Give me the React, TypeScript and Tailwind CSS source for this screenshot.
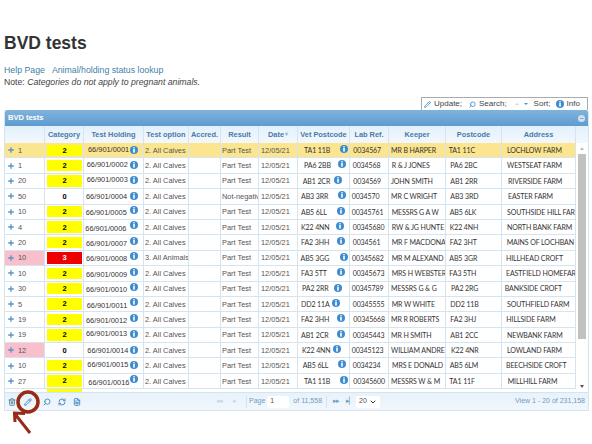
import { Pencil, Search, RefreshCw, FileText, Trash2, ChevronDown, Plus } from 'lucide-react'

type Row = {
  n: number
  cat: number
  holding: string
  hx: number
  hy: number
  opt: string
  result: string
  vet: string
  vx: number
  vi: number
  lab: string
  lx: number
  keeper: string
  kx: number
  post: string
  px: number
  addr: string
  ax: number
}

const rows: Row[] = [
  { n: 1, cat: 2, holding: '66/901/0001', hx: 4, hy: -1, opt: '2. All Calves', result: 'Part Test', vet: 'TA1 11B', vx: 6, vi: 42, lab: '0034567', lx: 3.3, keeper: 'MR B HARPER', kx: 2, post: 'TA1 11C', px: 2.7, addr: 'LOCHLOW FARM', ax: 5 },
  { n: 1, cat: 2, holding: '66/901/0002', hx: 2.7, hy: -1, opt: '2. All Calves', result: 'Part Test', vet: 'PA6 2BB', vx: 6, vi: 40, lab: '0034568', lx: 2.7, keeper: 'R & J JONES', kx: 2.7, post: 'PA6 2BC', px: 4.3, addr: 'WESTSEAT FARM', ax: 5 },
  { n: 20, cat: 2, holding: '66/901/0003', hx: 2.7, hy: -1, opt: '2. All Calves', result: 'Part Test', vet: 'AB1 2CR', vx: 4.7, vi: 36, lab: '0034569', lx: 3.3, keeper: 'JOHN SMITH', kx: 2, post: 'AB1 2RR', px: 4.3, addr: 'RIVERSIDE FARM', ax: 6 },
  { n: 50, cat: 0, holding: '66/901/0004', hx: 2, hy: 0, opt: '2. All Calves', result: 'Not-negativ', vet: 'AB3 3RR', vx: 3, vi: 40, lab: '0034570', lx: 1.7, keeper: 'MR C WRIGHT', kx: 2, post: 'AB3 3RD', px: 4.3, addr: 'EASTER FARM', ax: 6 },
  { n: 10, cat: 2, holding: '66/901/0005', hx: 1.7, hy: 1, opt: '2. All Calves', result: 'Part Test', vet: 'AB5 6LL', vx: 3, vi: 39, lab: '00345761', lx: 1.7, keeper: 'MESSRS G A W', kx: 2.7, post: 'AB5 6LK', px: 3.7, addr: 'SOUTHSIDE HILL FAR', ax: 5 },
  { n: 4, cat: 2, holding: '66/901/0006', hx: 1.3, hy: 1, opt: '2. All Calves', result: 'Part Test', vet: 'K22 4NN', vx: 3, vi: 38, lab: '00345680', lx: 2.7, keeper: 'RW & JG HUNTE', kx: 2.7, post: 'K22 4NH', px: 3.7, addr: 'NORTH BANK FARM', ax: 5 },
  { n: 20, cat: 2, holding: '66/901/0007', hx: 2, hy: 1, opt: '2. All Calves', result: 'Part Test', vet: 'FA2 3HH', vx: 3, vi: 39, lab: '0034561', lx: 2.7, keeper: 'MR F MACDONA', kx: 2.7, post: 'FA2 3HT', px: 3.7, addr: 'MAINS OF LOCHBAN', ax: 4.7 },
  { n: 10, cat: 3, holding: '66/901/0008', hx: 2, hy: 1, opt: '3. All Animals', result: 'Part Test', vet: 'AB5 3GG', vx: 2.5, vi: 42, lab: '00345682', lx: 2, keeper: 'MR M ALEXAND', kx: 2.7, post: 'AB5 3GR', px: 3.3, addr: 'HILLHEAD CROFT', ax: 4 },
  { n: 10, cat: 2, holding: '66/901/0009', hx: 2, hy: 1, opt: '2. All Calves', result: 'Part Test', vet: 'FA3 5TT', vx: 3, vi: 39, lab: '00345673', lx: 2.7, keeper: 'MRS H WEBSTER', kx: 2.7, post: 'FA3 5TH', px: 3.3, addr: 'EASTFIELD HOMEFAR', ax: 4 },
  { n: 30, cat: 2, holding: '66/901/0010', hx: 2, hy: 1, opt: '2. All Calves', result: 'Part Test', vet: 'PA2 2RR', vx: 4, vi: 36, lab: '00345789', lx: 1.7, keeper: 'MESSRS G & G', kx: 2, post: 'PA2 2RG', px: 5, addr: 'BANKSIDE CROFT', ax: 2.7 },
  { n: 5, cat: 2, holding: '66/901/0011', hx: 2.7, hy: 1, opt: '2. All Calves', result: 'Part Test', vet: 'DD2 11A', vx: 3, vi: 34, lab: '00345555', lx: 2.7, keeper: 'MR W WHITE', kx: 2.7, post: 'DD2 11B', px: 4.3, addr: 'SOUTHFIELD FARM', ax: 5 },
  { n: 19, cat: 2, holding: '66/901/0012', hx: 2, hy: 1, opt: '2. All Calves', result: 'Part Test', vet: 'FA2 3HH', vx: 3, vi: 39, lab: '00345668', lx: 3.3, keeper: 'MR R ROBERTS', kx: 2, post: 'FA2 3HJ', px: 4.3, addr: 'HILLSIDE FARM', ax: 4.3 },
  { n: 19, cat: 2, holding: '66/901/0013', hx: 2, hy: -1, opt: '2. All Calves', result: 'Part Test', vet: 'AB1 2CR', vx: 3, vi: 39, lab: '00345443', lx: 2.7, keeper: 'MR H SMITH', kx: 2, post: 'AB1 2CC', px: 4.3, addr: 'NEWBANK FARM', ax: 5 },
  { n: 12, cat: 0, holding: '66/901/0014', hx: 3.3, hy: 0, opt: '2. All Calves', result: 'Part Test', vet: 'K22 4NN', vx: 4, vi: 35, lab: '00345123', lx: 1.7, keeper: 'WILLIAM ANDRE', kx: 2, post: 'K22 4NR', px: 5, addr: 'LOWLAND FARM', ax: 5 },
  { n: 10, cat: 2, holding: '66/901/0015', hx: 3.3, hy: -1, opt: '2. All Calves', result: 'Part Test', vet: 'AB5 6LL', vx: 4.7, vi: 40, lab: '0034234', lx: 2.7, keeper: 'MRS E DONALD', kx: 3, post: 'AB5 6LM', px: 3.7, addr: 'BEECHSIDE CROFT', ax: 4 },
  { n: 27, cat: 2, holding: '66/901/0016', hx: 4.3, hy: 1, opt: '2. All Calves', result: 'Part Test', vet: 'TA1 11B', vx: 6, vi: 42, lab: '00345600', lx: 3.3, keeper: 'MESSRS W & M', kx: 2, post: 'TA1 11F', px: 3.3, addr: 'MILLHILL FARM', ax: 5.7 },
]

const headers = [
  { label: '', w: 'w-[40px]' },
  { label: 'Category', w: 'w-[39px]' },
  { label: 'Test Holding', w: 'w-[60px]' },
  { label: 'Test option', w: 'w-[45px]' },
  { label: 'Accred.', w: 'w-[32px]' },
  { label: 'Result', w: 'w-[38px]' },
  { label: 'Date', w: 'w-[39px]' },
  { label: 'Vet Postcode', w: 'w-[52px]' },
  { label: 'Lab Ref.', w: 'w-[39px]' },
  { label: 'Keeper', w: 'w-[57px]' },
  { label: 'Postcode', w: 'w-[56px]' },
  { label: 'Address', w: 'w-[74px]' },
]

function InfoDot({ className = '', style }: { className?: string; style?: React.CSSProperties }) {
  return (
    <svg width="8" height="8" viewBox="0 0 8 8" className={className} style={style}>
      <circle cx="4" cy="4" r="4" fill="#3f8bd0" />
      <rect x="3.2" y="1.2" width="1.6" height="1.2" fill="#fff" />
      <rect x="3.2" y="3" width="1.6" height="3.6" fill="#fff" />
    </svg>
  )
}

function CategoryCell({ cat }: { cat: number }) {
  const bg = cat === 2 ? 'bg-[#ffff00] text-black' : cat === 3 ? 'bg-[#ee0000] text-white' : 'text-black'
  return (
    <div className="w-[39px] shrink-0 border-r border-[#d5e4f1] py-[1.5px] pl-[2px] pr-[1px]">
      <div className={`flex h-full items-center justify-center text-[7.5px] font-bold ${bg}`}>{cat}</div>
    </div>
  )
}

function GridRow({ row, first }: { row: Row; first: boolean }) {
  const pink = row.n === 12 || row.cat === 3
  const pasted = "font-['Lato',sans-serif] text-[7px] tracking-[-0.1px] text-[#333]"
  return (
    <div className={`flex h-[15.4px] border-b border-[#d5e4f1] text-[7.4px] text-[#555] ${first ? 'bg-[#fbe58f]' : ''}`}>
      <div className={`flex w-[40px] shrink-0 items-center border-r border-[#d5e4f1] pl-[2px] ${pink ? 'bg-[#f9c0cb]' : ''}`}>
        <Plus size={8} strokeWidth={4} className="text-[#5a95c8]" />
        <span className="ml-[3px]">{row.n}</span>
      </div>
      <CategoryCell cat={row.cat} />
      <div className="relative flex w-[60px] shrink-0 items-center border-r border-[#d5e4f1]">
        <span className="text-[#333]" style={{ marginLeft: row.hx, marginTop: row.hy * 2 }}>{row.holding}</span>
        <InfoDot className="absolute left-[46px]" style={{ top: row.hy > 0 ? 1.5 : 2.5 }} />
      </div>
      <div className="flex w-[45px] shrink-0 items-center overflow-hidden whitespace-nowrap border-r border-[#d5e4f1] pl-[1px]">{row.opt}</div>
      <div className="w-[32px] shrink-0 border-r border-[#d5e4f1]" />
      <div className="flex w-[38px] shrink-0 items-center overflow-hidden whitespace-nowrap border-r border-[#d5e4f1] pl-[1px]">{row.result}</div>
      <div className="flex w-[39px] shrink-0 items-center border-r border-[#d5e4f1] pl-[2px]">12/05/21</div>
      <div className={`relative flex w-[52px] shrink-0 items-center whitespace-nowrap border-r border-[#d5e4f1] ${pasted}`}>
        <span style={{ marginLeft: row.vx }}>{row.vet}</span>
        <InfoDot className="absolute top-[2px]" style={{ left: row.vi }} />
      </div>
      <div className={`flex w-[39px] shrink-0 items-center overflow-hidden whitespace-nowrap border-r border-[#d5e4f1] ${pasted}`}>
        <span style={{ marginLeft: row.lx }}>{row.lab}</span>
      </div>
      <div className={`flex w-[57px] shrink-0 items-center overflow-hidden whitespace-nowrap border-r border-[#d5e4f1] ${pasted}`}>
        <span style={{ marginLeft: row.kx }}>{row.keeper}</span>
      </div>
      <div className={`flex w-[56px] shrink-0 items-center whitespace-nowrap border-r border-[#d5e4f1] ${pasted}`}>
        <span style={{ marginLeft: row.px }}>{row.post}</span>
      </div>
      <div className={`flex w-[74px] shrink-0 items-center overflow-hidden whitespace-nowrap border-r border-[#d5e4f1] ${pasted}`}>
        <span style={{ marginLeft: row.ax }}>{row.addr}</span>
      </div>
    </div>
  )
}

function Scrollbar() {
  return (
    <div className="flex w-[12px] shrink-0 flex-col items-center bg-white">
      <span className="mt-[4px] h-0 w-0 border-x-[2px] border-b-[3px] border-x-transparent border-b-[#bbb]" />
      <div className="mt-[4px] h-[185px] w-[8px] bg-[#c1c1c1]" />
      <span className="mt-auto mb-[4px] h-0 w-0 border-x-[2px] border-t-[3px] border-x-transparent border-t-[#555]" />
    </div>
  )
}

function Pager() {
  return (
    <div className="flex h-[18px] items-center rounded-b-[3px] border-t border-[#d5e4f1] bg-gradient-to-b from-[#e8f2fb] to-[#f1f7fc] text-[7px] text-[#6f9cc0]">
      <div className="flex w-[212px] shrink-0 items-center gap-[7px] pl-[3px] text-[#4f8fc8]">
        <Trash2 size={8} strokeWidth={3} className="text-[#5f88a8]" />
        <Pencil size={8} strokeWidth={3} className="ml-[1px]" />
        <Search size={8} strokeWidth={3} className="ml-[4px] -scale-x-100" />
        <RefreshCw size={8} strokeWidth={3} />
        <FileText size={8} strokeWidth={3} />
      </div>
      <span className="ml-[-1px] w-[14px] text-[7px] tracking-[-1px] text-[#c5d6e4]">◂◂</span>
      <span className="ml-[2px] w-[14px] text-[7px] tracking-[-1px] text-[#c5d6e4]">◂</span>
      <span className="h-[12px] w-px bg-[#d5e4f1]" />
      <span className="ml-[2px]">Page</span>
      <span className="ml-[2px] flex h-[12px] w-[22px] items-center rounded-[2px] bg-white pl-[3px] text-[#555]">1</span>
      <span className="ml-[4px]">of 11,558</span>
      <span className="ml-[4px] h-[12px] w-px bg-[#d5e4f1]" />
      <span className="ml-[6px] text-[7px] tracking-[-1px] text-[#6f9cc0]">▸▸</span>
      <span className="ml-[7px] text-[7px] tracking-[-1px] text-[#6f9cc0]">▸▏</span>
      <span className="ml-[3px] flex h-[12px] w-[24px] items-center justify-between rounded-[2px] bg-white px-[3px] text-[#555]">
        20
        <ChevronDown size={8} strokeWidth={3} className="text-[#333]" />
      </span>
      <span className="ml-auto pr-[3px]">View 1 - 20 of 231,158</span>
    </div>
  )
}

function Annotation() {
  return (
    <svg width="50" height="50" viewBox="0 0 50 50" className="absolute left-[5px] top-[388px]">
      <circle cx="23" cy="14" r="10" fill="none" stroke="#982a18" strokeWidth="3.5" />
      <path d="M25 45 L10 26 M10 34 L9.5 25 L20 25.5" fill="none" stroke="#982a18" strokeWidth="3" />
    </svg>
  )
}

export default function App() {
  return (
    <div className="relative h-[444px] w-[592px] overflow-hidden bg-white font-['Liberation_Sans',Arial,sans-serif]">
      <div className="px-[4px] pt-[33px]">
        <h1 className="text-[17.5px] font-bold leading-[20px] text-[#333]">BVD tests</h1>
        <div className="mt-[11px] flex gap-[7px] text-[8.75px] leading-[12px] text-[#3f7fa8]">
          <span>Help Page</span>
          <span>Animal/holding status lookup</span>
        </div>
        <p className="text-[8.7px] leading-[12px] text-[#444]">
          Note: <em>Categories do not apply to pregnant animals.</em>
        </p>
        <div className="ml-[417px] mt-[9px] flex h-[13px] w-[167px] items-center border border-[#aaa] border-b-0 pl-[2px] text-[8px] text-[#444]">
          <Pencil size={7} strokeWidth={3} className="text-[#4f8fc8]" />
          <span className="ml-[3px]">Update;</span>
          <Search size={7} strokeWidth={3} className="ml-[7px] -scale-x-100 text-[#4f8fc8]" />
          <span className="ml-[3px]">Search;</span>
          <span className="ml-[8px] h-0 w-0 border-x-[2px] border-b-[2px] border-x-transparent border-b-[#c5d6e4]" />
          <span className="ml-[5px] h-0 w-0 border-x-[2px] border-t-[2px] border-x-transparent border-t-[#4f8fc8]" />
          <span className="ml-[6px]">Sort;</span>
          <InfoDot className="ml-[5px]" />
          <span className="ml-[3px]">Info</span>
        </div>
      </div>

      <div className="mx-[4px] w-[585px] overflow-hidden rounded-t-[3px] border-x border-b border-[#d5e4f1]">
        <div className="flex h-[16px] items-center justify-between bg-gradient-to-b from-[#7fb3dc] to-[#5f9bd0] pl-[3px] pr-[3px] text-[7.5px] font-bold text-white">
          <span>BVD tests</span>
          <span className="flex h-[7px] w-[7px] items-center justify-center rounded-full bg-[#cfe0ee] text-[7px] leading-none text-[#6fa4d2]">−</span>
        </div>
        <div className="flex h-[17px] bg-gradient-to-b from-[#e3f0fb] to-[#f3f8fd] pr-[12px] text-[7.4px] font-bold text-[#4a7ba6]">
          {headers.map((h) => (
            <div key={h.label} className={`flex shrink-0 items-center justify-center whitespace-nowrap border-r border-[#d5e4f1] ${h.w}`}>
              {h.label}
              {h.label === 'Date' && <span className="ml-[1px] text-[6px] text-[#9bbcd8]">▾</span>}
            </div>
          ))}
        </div>
        <div className="flex h-[249px] overflow-hidden">
          <div className="flex-1 overflow-hidden">
            {rows.map((r, i) => (
              <GridRow key={r.holding} row={r} first={i === 0} />
            ))}
            <div className="flex h-[15.4px]">
              <div className="w-[40px]" />
              <div className="w-[39px] pl-[2px] pr-[2px]"><div className="h-full bg-[#ffff00]" /></div>
            </div>
          </div>
          <Scrollbar />
        </div>
        <Pager />
      </div>

      <Annotation />
    </div>
  )
}
